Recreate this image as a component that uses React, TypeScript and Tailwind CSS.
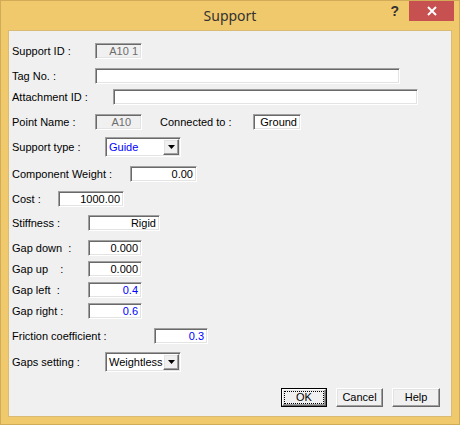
import React from "react";

const sunken =
  "border border-t-[#a0a0a0] border-l-[#a0a0a0] border-b-white border-r-white shadow-[inset_1px_1px_0_#696969,inset_-1px_-1px_0_#e3e3e3]";
const raised =
  "border border-t-white border-l-white border-b-[#696969] border-r-[#696969] shadow-[inset_-1px_-1px_0_#a0a0a0,inset_1px_1px_0_#e3e3e3]";

type FieldProps = {
  value?: string;
  className: string;
  blue?: boolean;
  disabled?: boolean;
  pad?: string;
};

function Field({ value = "", className, blue, disabled, pad = "pr-[3px]" }: FieldProps) {
  return (
    <div
      className={`h-[16px] flex items-center justify-end ${pad} ${sunken} ${
        disabled ? "bg-[#f0f0f0] text-[#6d6d6d]" : "bg-white"
      } ${blue ? "text-[#0000ff]" : ""} ${className}`}
    >
      <span className="leading-none">{value}</span>
    </div>
  );
}

function Combo({ value, blue }: { value: string; blue?: boolean }) {
  return (
    <div className={`w-[76px] h-[20px] flex items-center bg-white ${sunken}`}>
      <span className={`flex-1 pl-[3px] leading-none ${blue ? "text-[#0000ff]" : "text-black"}`}>
        {value}
      </span>
      <div className={`w-[16px] h-[16px] mr-[1px] flex items-center justify-center bg-[#f0f0f0] ${raised}`}>
        <svg width="7" height="4" viewBox="0 0 7 4">
          <polygon points="0,0 7,0 3.5,4" fill="#000" />
        </svg>
      </div>
    </div>
  );
}

function Row({
  label,
  lw,
  mt,
  children,
}: {
  label: string;
  lw: string;
  mt: string;
  children: React.ReactNode;
}) {
  return (
    <div className={`flex items-center ${mt}`}>
      <span className={`${lw} whitespace-pre leading-none`}>{label}</span>
      {children}
    </div>
  );
}

function Btn({ label, className, def }: { label: string; className: string; def?: boolean }) {
  if (def) {
    return (
      <div className={`h-[19px] border border-black ${className}`}>
        <div className={`h-full flex items-center justify-center bg-[#f0f0f0] ${raised}`}>
          <div className="w-[40px] h-[13px] flex items-center justify-center border border-dotted border-black leading-none">
            {label}
          </div>
        </div>
      </div>
    );
  }
  return (
    <div className={`h-[19px] flex items-center justify-center bg-[#f0f0f0] leading-none ${raised} ${className}`}>
      {label}
    </div>
  );
}

export default function App() {
  return (
    <div className="w-[460px] h-[425px] bg-[#f0c96c] border border-[#d1ab58] flex flex-col">
      <div className="h-[29px] flex">
        <div className="w-[74px]" />
        <div className="flex-1 flex items-center justify-center pb-[1px] font-['Noto_Sans',sans-serif] text-[14px] text-[#333333]">
          Support
        </div>
        <div className="w-[74px] flex items-start justify-end pr-[5px]">
          <span className="mt-[3px] mr-[10px] font-['Liberation_Sans',Arial,sans-serif] font-bold text-[14px] leading-none text-[#333333]">
            ?
          </span>
          <div className="w-[45px] h-[20px] bg-[#c75050] flex items-center justify-center">
            <svg width="10" height="10" viewBox="0 0 10 10">
              <path d="M1 1 L9 9 M9 1 L1 9" stroke="#ffffff" strokeWidth="2" />
            </svg>
          </div>
        </div>
      </div>

      <div className="mx-[7px] h-[387px] bg-[#f0f0f0] border border-[#d9bb74] pl-[3px] pt-[12px] font-['Liberation_Sans',Arial,sans-serif] text-[11px] text-black flex flex-col">
        <Row label="Support ID :" lw="w-[83px]" mt="mt-0">
          <Field value="A10 1" className="w-[47px]" disabled />
        </Row>
        <Row label="Tag No. :" lw="w-[83px]" mt="mt-[9px]">
          <Field className="w-[305px]" />
        </Row>
        <Row label="Attachment ID :" lw="w-[101px]" mt="mt-[5px]">
          <Field className="w-[305px]" />
        </Row>
        <Row label="Point Name :" lw="w-[83px]" mt="mt-[9px]">
          <Field value="A10" className="w-[47px]" disabled pad="pr-[10px]" />
          <span className="ml-[18px] w-[93px] leading-none">Connected to :</span>
          <Field value="Ground" className="w-[48px]" />
        </Row>
        <Row label="Support type :" lw="w-[93px]" mt="mt-[7px]">
          <Combo value="Guide" blue />
        </Row>
        <Row label="Component Weight :" lw="w-[118px]" mt="mt-[9px]">
          <Field value="0.00" className="w-[67px]" />
        </Row>
        <Row label="Cost :" lw="w-[46px]" mt="mt-[9px]">
          <Field value="1000.00" className="w-[66px]" />
        </Row>
        <Row label="Stiffness :" lw="w-[76px]" mt="mt-[8px]">
          <Field value="Rigid" className="w-[72px]" />
        </Row>
        <Row label="Gap down  :" lw="w-[76px]" mt="mt-[9px]">
          <Field value="0.000" className="w-[54px]" />
        </Row>
        <Row label="Gap up    :" lw="w-[76px]" mt="mt-[5px]">
          <Field value="0.000" className="w-[54px]" />
        </Row>
        <Row label="Gap left  :" lw="w-[76px]" mt="mt-[5px]">
          <Field value="0.4" className="w-[54px]" blue />
        </Row>
        <Row label="Gap right :" lw="w-[76px]" mt="mt-[5px]">
          <Field value="0.6" className="w-[54px]" blue />
        </Row>
        <Row label="Friction coefficient :" lw="w-[142px]" mt="mt-[9px]">
          <Field value="0.3" className="w-[54px]" blue />
        </Row>
        <Row label="Gaps setting :" lw="w-[93px]" mt="mt-[8px]">
          <Combo value="Weightless" />
        </Row>

        <div className="mt-[16px] flex justify-end gap-[9px] pr-[11px]">
          <Btn label="OK" className="w-[46px]" def />
          <Btn label="Cancel" className="w-[47px]" />
          <Btn label="Help" className="w-[48px]" />
        </div>
      </div>
    </div>
  );
}
